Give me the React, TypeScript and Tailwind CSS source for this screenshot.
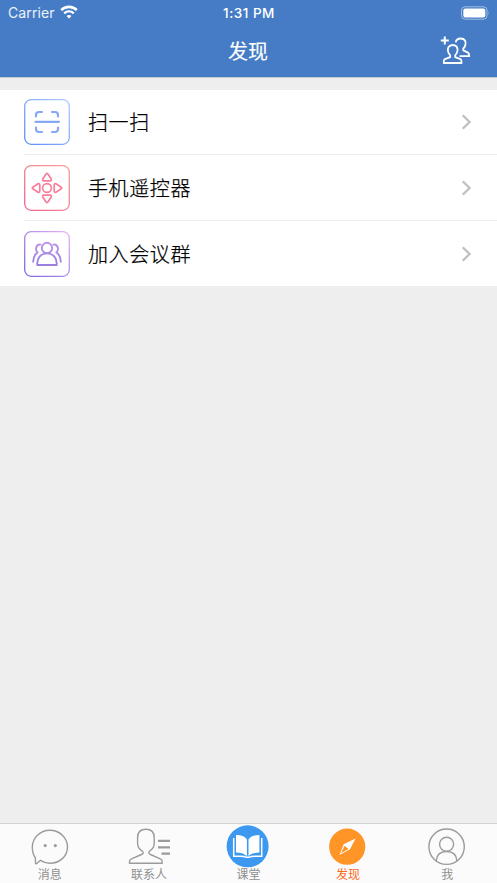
import React from "react";

function ScanIcon() {
  return (
    <svg width="46" height="46" viewBox="0 0 46 46" fill="none">
      <defs>
        <linearGradient id="scan" x1="0" y1="46" x2="46" y2="0" gradientUnits="userSpaceOnUse">
          <stop stopColor="#5b8cf5" />
          <stop offset="1" stopColor="#b3cbff" />
        </linearGradient>
      </defs>
      <rect x="0.7" y="0.7" width="44.6" height="44.6" rx="6.5" stroke="url(#scan)" strokeWidth="1.3" />
      <g stroke="#86a9f7" strokeWidth="2.2" strokeLinecap="round">
        <path d="M12 17.5V16a3 3 0 0 1 3-3h3" />
        <path d="M28 13h3a3 3 0 0 1 3 3v1.5" />
        <path d="M12 28.5V30a3 3 0 0 0 3 3h3" />
        <path d="M28 33h3a3 3 0 0 0 3-3v-1.5" />
        <path d="M11.5 22.8h23.5" />
      </g>
    </svg>
  );
}

function RemoteIcon() {
  return (
    <svg width="46" height="46" viewBox="0 0 46 46" fill="none">
      <defs>
        <linearGradient id="remote" x1="0" y1="46" x2="46" y2="0" gradientUnits="userSpaceOnUse">
          <stop stopColor="#f4608d" />
          <stop offset="1" stopColor="#f7a39c" />
        </linearGradient>
      </defs>
      <rect x="0.7" y="0.7" width="44.6" height="44.6" rx="6.5" stroke="url(#remote)" strokeWidth="1.3" />
      <g stroke="#f6809a" strokeWidth="1.7" strokeLinejoin="round">
        <circle cx="23" cy="23" r="4.4" />
        <path d="M22.2 8.8Q23 7.8 23.8 8.8L27.2 14Q27.7 15.6 26.2 15.8H19.8Q18.3 15.6 18.8 14Z" />
        <path d="M22.2 37.2Q23 38.2 23.8 37.2L27.2 32Q27.7 30.4 26.2 30.2H19.8Q18.3 30.4 18.8 32Z" />
        <path d="M8.8 22.2Q7.8 23 8.8 23.8L14 27.2Q15.6 27.7 15.8 26.2V19.8Q15.6 18.3 14 18.8Z" />
        <path d="M37.2 22.2Q38.2 23 37.2 23.8L32 27.2Q30.4 27.7 30.2 26.2V19.8Q30.4 18.3 32 18.8Z" />
      </g>
    </svg>
  );
}

function MeetingIcon() {
  return (
    <svg width="46" height="46" viewBox="0 0 46 46" fill="none">
      <defs>
        <linearGradient id="meeting" x1="0" y1="46" x2="46" y2="0" gradientUnits="userSpaceOnUse">
          <stop stopColor="#7a63d8" />
          <stop offset="1" stopColor="#e8b5f7" />
        </linearGradient>
        <linearGradient id="people" x1="23" y1="34" x2="23" y2="11" gradientUnits="userSpaceOnUse">
          <stop stopColor="#9a7fe0" />
          <stop offset="1" stopColor="#bd94ea" />
        </linearGradient>
      </defs>
      <rect x="0.7" y="0.7" width="44.6" height="44.6" rx="6.5" stroke="url(#meeting)" strokeWidth="1.3" />
      <g stroke="url(#people)" strokeWidth="1.9" strokeLinecap="round" strokeLinejoin="round">
        <circle cx="23" cy="17" r="5.2" />
        <path d="M13.3 34c-.6-6.8 3.5-11.6 9.7-11.6s10.3 4.8 9.7 11.6Z" />
        <path d="M16.5 13.6c-4-.5-6 4.7-2.9 7.8-2.6 1.7-4.2 4.9-4.4 9.2" />
        <path d="M29.500 13.600c4-.5 6 4.700 2.900 7.800 2.600 1.700 4.200 4.900 4.400 9.200" />
      </g>
    </svg>
  );
}

const rows = [
  { label: "扫一扫", icon: <ScanIcon />, height: "h-[65px]" },
  { label: "手机遥控器", icon: <RemoteIcon />, height: "h-[66px]" },
  { label: "加入会议群", icon: <MeetingIcon />, height: "h-[65px]" },
];

const tabs = [
  {
    label: "消息",
    icon: (
      <g stroke="#9b9b9b" strokeWidth="1.4" strokeLinejoin="round">
        <path d="M9.4 34C7.2 31 6.3 27.5 6.3 23.3C6.3 13.8 14.1 6.3 23.9 6.3C33.7 6.3 41.5 13.8 41.5 23C41.5 32.3 33.7 39.3 23.9 39.3C20.5 39.3 17.5 38.3 14.5 36.3L10.5 39.7Q9.5 40.2 9.5 39Z" />
        <circle cx="19.2" cy="21.6" r="1.6" fill="#9b9b9b" stroke="none" />
        <circle cx="29.3" cy="21.6" r="1.6" fill="#9b9b9b" stroke="none" />
      </g>
    ),
  },
  {
    label: "联系人",
    icon: (
      <>
        <path
          d="M20.8 5.2C15 5.2 12.6 8.8 12.6 13.5V19.5C12.6 23 14 25 16.8 26.8C19 28.4 18.5 29.5 16.5 30.5L6.5 34.8Q4.5 35.6 4.5 37.5V39.3H37.2V37.5Q37.2 35.6 35.2 34.8L25.5 30.5C23.5 29.5 23 28.4 25 26.8C27.8 25 29.2 23 29.2 19.5V13.5C29.2 8.8 26.8 5.2 20.8 5.2Z"
          stroke="#9b9b9b"
          strokeWidth="1.4"
          strokeLinejoin="round"
        />
        <path d="M33 16.8H45M33 23.3H45M36.5 29.6H45" stroke="#9b9b9b" strokeWidth="2.2" />
      </>
    ),
  },
  {
    label: "课堂",
    icon: (
      <>
        <circle cx="23.6" cy="22.3" r="21" fill="#3d99ef" />
        <path d="M22.9 15.5C20.6 12 16.6 11 12 11V28.5C16.5 28.7 20.1 29.3 22.9 32.3Z" fill="white" />
        <path d="M24.5 15.5C26.8 12 30.8 11 35.4 11V28.5C30.9 28.7 27.3 29.3 24.5 32.3Z" fill="white" />
        <path d="M9.7 14V32.2H16Q20.5 32.2 22.3 33.2H25Q27 32.2 31.5 32.2H37.7V14" stroke="white" strokeWidth="1.5" />
      </>
    ),
  },
  {
    label: "发现",
    active: true,
    icon: (
      <>
        <circle cx="23.2" cy="22.7" r="18.1" fill="#ff9427" />
        <path d="M31.5 14.4L26 25.3L15.5 31L19.7 20.3Z" fill="white" />
        <path d="M20.5 21.8L24.5 25.1L17 29.2Z" fill="#ff9427" />
      </>
    ),
  },
  {
    label: "我",
    icon: (
      <g stroke="#9b9b9b" strokeWidth="1.4">
        <circle cx="23.6" cy="22.7" r="17.7" />
        <circle cx="23.6" cy="20.3" r="7" />
        <path d="M13.2 37C13.6 31 17.2 27.5 23.6 27.5S33.6 31 34 37" />
      </g>
    ),
  },
];

export default function App() {
  return (
    <div className="flex h-[883px] w-[497px] flex-col bg-[#eeeeee] font-['Inter','Noto_Sans_CJK_SC',sans-serif]">
      <header className="h-[78px] border-b border-[#c3cbd7] bg-[#457cc5] text-white">
        <div className="grid h-[26px] grid-cols-3 items-center pl-[8px] pr-[7px] leading-none">
          <div className="flex items-center gap-[5px]">
            <span className="text-[14px] tracking-[0.1px] text-white/90">Carrier</span>
            <svg width="18" height="14" viewBox="0 0 18 14" fill="none" className="-mt-[2px]">
              <path d="M1.2 5.2C5.5.7 12.5.7 16.8 5.2" stroke="white" strokeWidth="2.6" />
              <path d="M4.2 8.4C7 5.7 11 5.7 13.8 8.4" stroke="white" strokeWidth="2.3" />
              <path d="M9 13.4L6.500 10.9Q9 8.9 11.500 10.9Z" fill="white" />
            </svg>
          </div>
          <span className="pt-px text-center text-[13.5px] font-medium tracking-[0.5px]">1:31 PM</span>
          <svg width="30" height="14" viewBox="0 0 30 14" fill="none" className="-mt-px justify-self-end">
            <rect x="1.5" y="0.8" width="25.5" height="12.4" rx="3.5" stroke="white" strokeOpacity="0.5" />
            <rect x="3.3" y="2.6" width="22" height="8.8" rx="2" fill="white" />
            <path d="M28.5 5.2Q30 7 28.5 8.8Z" fill="white" fillOpacity="0.5" />
          </svg>
        </div>

        <div className="grid h-[51px] grid-cols-3 items-center">
          <h1 className="col-start-2 pr-px text-center text-[20px] font-normal leading-[50px] [-webkit-text-stroke:0.15px_white]">
            发现
          </h1>
          <svg width="32" height="30" viewBox="0 0 32 30" fill="none" className="-mt-[3px] mr-[25px] justify-self-end">
            <path d="M4.8 1.5V9.5M0.8 5.5H8.8" stroke="white" strokeWidth="2" />
            <g stroke="white" strokeWidth="1.8" strokeLinejoin="round">
              <path d="M12.8 10C8.5 10 7.3 13.3 8.1 16.6C8.5 18.2 9.2 19 10.2 20.3V22.2L4.9 24.1Q3.8 24.6 3.8 26.8V28H21.5V26.8Q21.5 24.6 20.4 24.1L15.2 22.2V20.3C16.2 19 16.900 18.200 17.300 16.600C18.100 13.300 17 10 12.800 10Z" />
              <path d="M15.7 7.3C16.2 4.6 18 3.5 20.7 3.5C25 3.5 26.2 6.5 25.4 10C25 11.6 24.3 12.5 23.3 13.7V15.4L28 17.6Q29.2 18.2 29.2 21.2H19.5" />
            </g>
          </svg>
        </div>
      </header>

      <main className="flex-1 pt-[12px]">
        <ul className="bg-white">
          {rows.map((row, i) => (
            <li key={row.label} className={`${row.height} pl-[24px]`}>
              <div
                className={`flex h-full items-center pr-[25px] ${
                  i < rows.length - 1 ? "border-b border-[#ededed]" : ""
                }`}
              >
                {row.icon}
                <span className="ml-[18px] flex-1 pt-[2px] text-[20px] font-light leading-none tracking-[0.6px] text-black [-webkit-text-stroke:0.25px_black]">
                  {row.label}
                </span>
                <svg width="11" height="16" viewBox="0 0 11 16" fill="none">
                  <path d="M1.7 1.2L8.6 8L1.7 14.8" stroke="#c0c0c0" strokeWidth="2.3" />
                </svg>
              </div>
            </li>
          ))}
        </ul>
      </main>

      <nav className="grid h-[60px] grid-cols-5 border-t border-[#d2d2d2] bg-[#fbfbfb]">
        {tabs.map((tab) => (
          <button key={tab.label} className="flex flex-col items-center">
            <svg width="48" height="44" viewBox="0 0 48 44" fill="none" className="shrink-0">
              {tab.icon}
            </svg>
            <span
              className={`text-[12px] leading-[14px] ${
                tab.active ? "text-[#fb6a21]" : "text-[#8f8f8f]"
              }`}
            >
              {tab.label}
            </span>
          </button>
        ))}
      </nav>
    </div>
  );
}
